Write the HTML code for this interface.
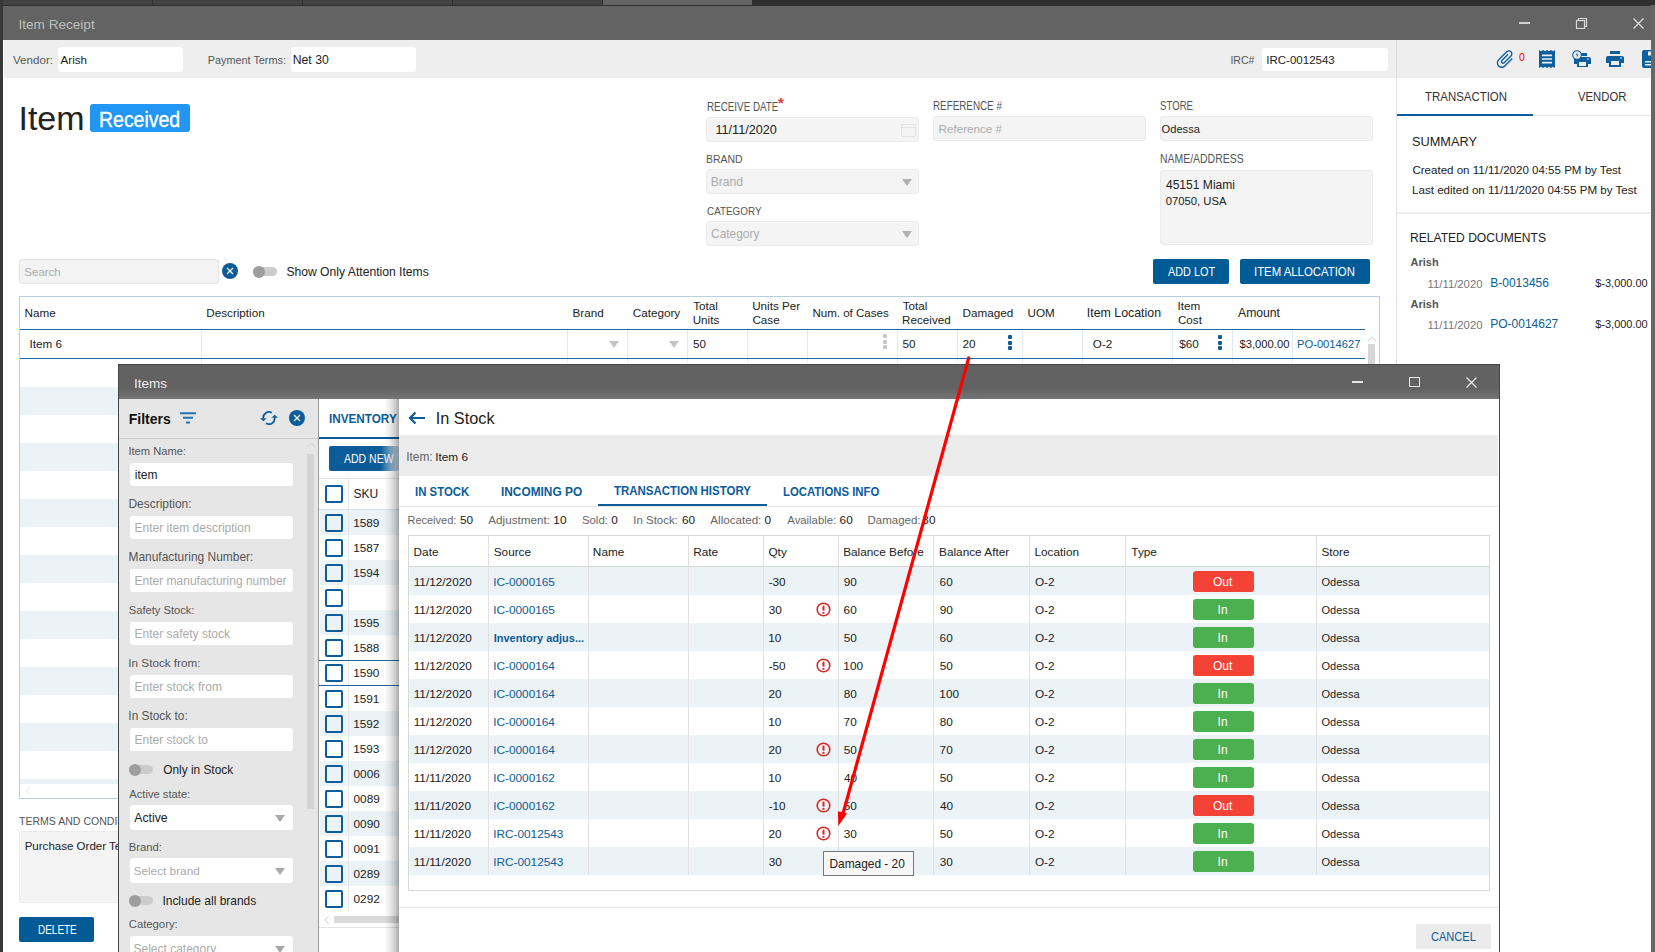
<!DOCTYPE html>
<html><head><meta charset="utf-8"><style>
html,body{margin:0;padding:0;}
body{width:1655px;height:952px;position:relative;overflow:hidden;background:#fff;font-family:"Liberation Sans",sans-serif;}
.t{position:absolute;white-space:nowrap;line-height:1;}
</style></head><body>
<div style="position:absolute;left:0px;top:0px;width:1655px;height:6px;background:#303030"></div>
<div style="position:absolute;left:0px;top:0px;width:152px;height:5px;background:#424242"></div>
<div style="position:absolute;left:153px;top:0px;width:149px;height:5px;background:#424242"></div>
<div style="position:absolute;left:303px;top:0px;width:149px;height:5px;background:#424242"></div>
<div style="position:absolute;left:453px;top:0px;width:149px;height:5px;background:#424242"></div>
<div style="position:absolute;left:603px;top:0px;width:149px;height:5px;background:#646464"></div>
<div style="position:absolute;left:0px;top:0px;width:3px;height:952px;background:#383838"></div>
<div style="position:absolute;left:1651px;top:5px;width:4px;height:947px;background:#666"></div>
<div style="position:absolute;left:3px;top:6px;width:1648px;height:34px;background:#636363"></div>
<div class="t" style="left:18.48px;top:18.00px;font-size:13.59px;color:#bdbdbd;font-weight:normal;">Item Receipt</div>
<div style="position:absolute;left:1519px;top:22px;width:11px;height:2px;background:#cfcfcf"></div>
<svg style="position:absolute;left:1575px;top:17px" width="13" height="12"><rect x="1.5" y="3.5" width="8" height="8" fill="none" stroke="#d8d8d8" stroke-width="1.2"/><path d="M3.5 3.5V1.5h8v8h-2" fill="none" stroke="#d8d8d8" stroke-width="1.2"/></svg>
<svg style="position:absolute;left:1633px;top:18px" width="11" height="11"><path d="M0.5 0.5L10.5 10.5M10.5 0.5L0.5 10.5" stroke="#e0e0e0" stroke-width="1.2"/></svg>
<div style="position:absolute;left:4px;top:40px;width:1647px;height:38px;background:#eeeeee"></div>
<div class="t" style="left:13.00px;top:54.00px;font-size:11.61px;color:#555;font-weight:normal;">Vendor:</div>
<div style="position:absolute;left:58px;top:47px;width:125px;height:25px;background:#fff;border-radius:3px"></div>
<div class="t" style="left:60.50px;top:54.00px;font-size:11.63px;color:#222222;font-weight:normal;">Arish</div>
<div class="t" style="left:207.73px;top:55.00px;font-size:10.87px;color:#555;font-weight:normal;">Payment Terms:</div>
<div style="position:absolute;left:291px;top:47px;width:125px;height:25px;background:#fff;border-radius:3px"></div>
<div class="t" style="left:292.72px;top:54.00px;font-size:12.23px;color:#222222;font-weight:normal;">Net 30</div>
<div class="t" style="left:1230.45px;top:55.00px;font-size:10.50px;color:#555;font-weight:normal;">IRC#</div>
<div style="position:absolute;left:1262px;top:48px;width:126px;height:23px;background:#fff;border-radius:3px"></div>
<div class="t" style="left:1266.26px;top:55.00px;font-size:11.53px;color:#222222;font-weight:normal;">IRC-0012543</div>
<div style="position:absolute;left:1396px;top:40px;width:1px;height:38px;background:#dcdcdc"></div>
<div class="t" style="left:18.44px;top:102.00px;font-size:33.97px;color:#222222;font-weight:normal;">Item</div>
<div style="position:absolute;left:90px;top:104px;width:100px;height:28px;background:#2196f3;border-radius:3px"></div>
<div class="t" style="left:99.44px;top:109.00px;font-size:21.59px;color:#fff;font-weight:normal;transform:scaleX(0.9020);transform-origin:0 0;-webkit-text-stroke:0.35px #fff;">Received</div>
<div class="t" style="left:706.51px;top:102.00px;font-size:11.88px;color:#555;font-weight:normal;transform:scaleX(0.8285);transform-origin:0 0;">RECEIVE DATE</div>
<div class="t" style="left:778.00px;top:95.00px;font-size:15.00px;color:#e53935;font-weight:bold;">*</div>
<div style="position:absolute;left:706px;top:117px;width:213px;height:25px;background:#f4f4f4;border:1px solid #ebebeb;border-radius:3px;box-sizing:border-box"></div>
<div class="t" style="left:715.41px;top:124.00px;font-size:12.67px;color:#222222;font-weight:normal;">11/11/2020</div>
<svg style="position:absolute;left:901px;top:122px" width="15" height="15"><rect x="0.5" y="2.5" width="14" height="12" rx="1.5" fill="none" stroke="#e2e2e2"/><path d="M1 5.5H14" stroke="#e2e2e2"/></svg>
<div class="t" style="left:706.46px;top:153.00px;font-size:11.74px;color:#555;font-weight:normal;transform:scaleX(0.8897);transform-origin:0 0;">BRAND</div>
<div style="position:absolute;left:706px;top:169px;width:213px;height:25px;background:#f4f4f4;border:1px solid #ebebeb;border-radius:3px;box-sizing:border-box"></div>
<div class="t" style="left:710.73px;top:176.00px;font-size:12.14px;color:#ababab;font-weight:normal;">Brand</div>
<svg style="position:absolute;left:902px;top:179px" width="10" height="7"><path d="M0 0H10L5.0 7Z" fill="#b0b0b0"/></svg>
<div class="t" style="left:706.81px;top:205.00px;font-size:11.74px;color:#555;font-weight:normal;transform:scaleX(0.8409);transform-origin:0 0;">CATEGORY</div>
<div style="position:absolute;left:706px;top:221px;width:213px;height:25px;background:#f4f4f4;border:1px solid #ebebeb;border-radius:3px;box-sizing:border-box"></div>
<div class="t" style="left:711.11px;top:229.00px;font-size:11.90px;color:#ababab;font-weight:normal;">Category</div>
<svg style="position:absolute;left:902px;top:231px" width="10" height="7"><path d="M0 0H10L5.0 7Z" fill="#b0b0b0"/></svg>
<div class="t" style="left:932.51px;top:101.00px;font-size:11.88px;color:#555;font-weight:normal;transform:scaleX(0.8281);transform-origin:0 0;">REFERENCE #</div>
<div style="position:absolute;left:933px;top:116px;width:213px;height:24.5px;background:#f4f4f4;border:1px solid #ebebeb;border-radius:3px;box-sizing:border-box"></div>
<div class="t" style="left:938.57px;top:123.00px;font-size:11.66px;color:#ababab;font-weight:normal;">Reference #</div>
<div class="t" style="left:1159.92px;top:101.00px;font-size:11.88px;color:#555;font-weight:normal;transform:scaleX(0.8112);transform-origin:0 0;">STORE</div>
<div style="position:absolute;left:1160px;top:116px;width:213px;height:24.5px;background:#f4f4f4;border:1px solid #ebebeb;border-radius:3px;box-sizing:border-box"></div>
<div class="t" style="left:1161.55px;top:124.00px;font-size:11.14px;color:#222222;font-weight:normal;">Odessa</div>
<div class="t" style="left:1159.56px;top:154.00px;font-size:11.88px;color:#555;font-weight:normal;transform:scaleX(0.8800);transform-origin:0 0;">NAME/ADDRESS</div>
<div style="position:absolute;left:1160px;top:170px;width:213px;height:75px;background:#f4f4f4;border:1px solid #ebebeb;border-radius:3px;box-sizing:border-box"></div>
<div class="t" style="left:1165.96px;top:179.00px;font-size:12.07px;color:#222222;font-weight:normal;">45151 Miami</div>
<div class="t" style="left:1165.75px;top:196.00px;font-size:11.27px;color:#222222;font-weight:normal;">07050, USA</div>
<div style="position:absolute;left:19px;top:259px;width:200px;height:25px;background:#f3f3f3;border:1px solid #e6e6e6;border-radius:3px;box-sizing:border-box"></div>
<div class="t" style="left:24.32px;top:267.00px;font-size:11.51px;color:#ababab;font-weight:normal;">Search</div>
<svg style="position:absolute;left:222px;top:263px" width="16" height="16"><circle cx="8" cy="8" r="8" fill="#0b5c99"/><path d="M5 5L11 11M11 5L5 11" stroke="#fff" stroke-width="1.3"/></svg>
<div style="position:absolute;left:253px;top:267.3px;width:24px;height:8.4px;background:#cccccc;border-radius:4.2px"></div>
<div style="position:absolute;left:253px;top:265.5px;width:12px;height:12px;background:#9e9e9e;border-radius:6px"></div>
<div class="t" style="left:286.39px;top:266.00px;font-size:12.15px;color:#222222;font-weight:normal;">Show Only Attention Items</div>
<div style="position:absolute;left:1153px;top:259px;width:76px;height:25px;background:#005b97;border-radius:2px"></div>
<div class="t" style="left:1168.40px;top:265.00px;font-size:13.04px;color:#fff;font-weight:normal;transform:scaleX(0.8343);transform-origin:0 0;">ADD LOT</div>
<div style="position:absolute;left:1240px;top:259px;width:130px;height:25px;background:#005b97;border-radius:2px"></div>
<div class="t" style="left:1254.48px;top:265.00px;font-size:13.04px;color:#fff;font-weight:normal;transform:scaleX(0.8724);transform-origin:0 0;">ITEM ALLOCATION</div>
<div style="position:absolute;left:19px;top:296px;width:1361px;height:503px;border:1px solid #b9cfe1;box-sizing:border-box;background:#fff"></div>
<div style="position:absolute;left:20px;top:387px;width:1359px;height:28px;background:#ecf3f6"></div>
<div style="position:absolute;left:20px;top:443px;width:1359px;height:28px;background:#ecf3f6"></div>
<div style="position:absolute;left:20px;top:499px;width:1359px;height:28px;background:#ecf3f6"></div>
<div style="position:absolute;left:20px;top:555px;width:1359px;height:28px;background:#ecf3f6"></div>
<div style="position:absolute;left:20px;top:611px;width:1359px;height:28px;background:#ecf3f6"></div>
<div style="position:absolute;left:20px;top:667px;width:1359px;height:28px;background:#ecf3f6"></div>
<div style="position:absolute;left:20px;top:723px;width:1359px;height:28px;background:#ecf3f6"></div>
<div style="position:absolute;left:20px;top:779px;width:1359px;height:5px;background:#ecf3f6"></div>
<div style="position:absolute;left:20px;top:784px;width:1359px;height:14px;background:#fff"></div>
<svg style="position:absolute;left:24px;top:786px" width="8" height="10"><path d="M6 1L2 5L6 9" fill="none" stroke="#eeeeee" stroke-width="1.2"/></svg>
<div style="position:absolute;left:20px;top:328.5px;width:1345px;height:1.5px;background:#1f6aa3"></div>
<div style="position:absolute;left:20px;top:357.5px;width:1345px;height:1.5px;background:#1f6aa3"></div>
<div style="position:absolute;left:201px;top:330px;width:1px;height:28px;background:#e3e9ee"></div>
<div style="position:absolute;left:201px;top:359px;width:1px;height:5px;background:#eef2f5"></div>
<div style="position:absolute;left:567px;top:330px;width:1px;height:28px;background:#e3e9ee"></div>
<div style="position:absolute;left:567px;top:359px;width:1px;height:5px;background:#eef2f5"></div>
<div style="position:absolute;left:627px;top:330px;width:1px;height:28px;background:#e3e9ee"></div>
<div style="position:absolute;left:627px;top:359px;width:1px;height:5px;background:#eef2f5"></div>
<div style="position:absolute;left:687px;top:330px;width:1px;height:28px;background:#e3e9ee"></div>
<div style="position:absolute;left:687px;top:359px;width:1px;height:5px;background:#eef2f5"></div>
<div style="position:absolute;left:747px;top:330px;width:1px;height:28px;background:#e3e9ee"></div>
<div style="position:absolute;left:747px;top:359px;width:1px;height:5px;background:#eef2f5"></div>
<div style="position:absolute;left:807px;top:330px;width:1px;height:28px;background:#e3e9ee"></div>
<div style="position:absolute;left:807px;top:359px;width:1px;height:5px;background:#eef2f5"></div>
<div style="position:absolute;left:897px;top:330px;width:1px;height:28px;background:#e3e9ee"></div>
<div style="position:absolute;left:897px;top:359px;width:1px;height:5px;background:#eef2f5"></div>
<div style="position:absolute;left:957px;top:330px;width:1px;height:28px;background:#e3e9ee"></div>
<div style="position:absolute;left:957px;top:359px;width:1px;height:5px;background:#eef2f5"></div>
<div style="position:absolute;left:1022px;top:330px;width:1px;height:28px;background:#e3e9ee"></div>
<div style="position:absolute;left:1022px;top:359px;width:1px;height:5px;background:#eef2f5"></div>
<div style="position:absolute;left:1082px;top:330px;width:1px;height:28px;background:#e3e9ee"></div>
<div style="position:absolute;left:1082px;top:359px;width:1px;height:5px;background:#eef2f5"></div>
<div style="position:absolute;left:1172px;top:330px;width:1px;height:28px;background:#e3e9ee"></div>
<div style="position:absolute;left:1172px;top:359px;width:1px;height:5px;background:#eef2f5"></div>
<div style="position:absolute;left:1232px;top:330px;width:1px;height:28px;background:#e3e9ee"></div>
<div style="position:absolute;left:1232px;top:359px;width:1px;height:5px;background:#eef2f5"></div>
<div style="position:absolute;left:1292px;top:330px;width:1px;height:28px;background:#e3e9ee"></div>
<div style="position:absolute;left:1292px;top:359px;width:1px;height:5px;background:#eef2f5"></div>
<div class="t" style="left:24.46px;top:307.00px;font-size:11.70px;color:#222222;font-weight:normal;">Name</div>
<div class="t" style="left:206.26px;top:307.00px;font-size:11.70px;color:#222222;font-weight:normal;">Description</div>
<div class="t" style="left:572.46px;top:307.00px;font-size:11.70px;color:#222222;font-weight:normal;">Brand</div>
<div class="t" style="left:632.71px;top:307.00px;font-size:11.70px;color:#222222;font-weight:normal;">Category</div>
<div class="t" style="left:693.27px;top:300.00px;font-size:11.70px;color:#222222;font-weight:normal;">Total</div>
<div class="t" style="left:692.68px;top:314.00px;font-size:11.70px;color:#222222;font-weight:normal;">Units</div>
<div class="t" style="left:752.18px;top:300.00px;font-size:11.70px;color:#222222;font-weight:normal;">Units Per</div>
<div class="t" style="left:752.41px;top:314.00px;font-size:11.70px;color:#222222;font-weight:normal;">Case</div>
<div class="t" style="left:812.38px;top:308.00px;font-size:11.55px;color:#222222;font-weight:normal;">Num. of Cases</div>
<div class="t" style="left:902.77px;top:300.00px;font-size:11.70px;color:#222222;font-weight:normal;">Total</div>
<div class="t" style="left:902.06px;top:314.00px;font-size:11.70px;color:#222222;font-weight:normal;">Received</div>
<div class="t" style="left:962.46px;top:307.00px;font-size:11.70px;color:#222222;font-weight:normal;">Damaged</div>
<div class="t" style="left:1027.58px;top:307.00px;font-size:11.70px;color:#222222;font-weight:normal;">UOM</div>
<div class="t" style="left:1086.78px;top:307.00px;font-size:12.39px;color:#222222;font-weight:normal;">Item Location</div>
<div class="t" style="left:1177.45px;top:300.00px;font-size:11.70px;color:#222222;font-weight:normal;">Item</div>
<div class="t" style="left:1177.91px;top:314.00px;font-size:11.70px;color:#222222;font-weight:normal;">Cost</div>
<div class="t" style="left:1238.00px;top:307.00px;font-size:12.20px;color:#222222;font-weight:normal;">Amount</div>
<div class="t" style="left:29.55px;top:338.00px;font-size:11.70px;color:#222222;font-weight:normal;">Item 6</div>
<svg style="position:absolute;left:609px;top:341px" width="10" height="7"><path d="M0 0H10L5.0 7Z" fill="#c4c4c4"/></svg>
<svg style="position:absolute;left:669px;top:341px" width="10" height="7"><path d="M0 0H10L5.0 7Z" fill="#c4c4c4"/></svg>
<div class="t" style="left:693.03px;top:338.00px;font-size:11.70px;color:#222222;font-weight:normal;">50</div>
<div style="position:absolute;left:883px;top:334.0px;width:4px;height:4px;background:#c8c8c8;border-radius:1px"></div>
<div style="position:absolute;left:883px;top:339.5px;width:4px;height:4px;background:#c8c8c8;border-radius:1px"></div>
<div style="position:absolute;left:883px;top:345.0px;width:4px;height:4px;background:#c8c8c8;border-radius:1px"></div>
<div class="t" style="left:902.53px;top:338.00px;font-size:11.70px;color:#222222;font-weight:normal;">50</div>
<div class="t" style="left:962.41px;top:338.00px;font-size:11.70px;color:#222222;font-weight:normal;">20</div>
<div style="position:absolute;left:1008px;top:335.0px;width:4px;height:4px;background:#0b5c99;border-radius:1px"></div>
<div style="position:absolute;left:1008px;top:340.5px;width:4px;height:4px;background:#0b5c99;border-radius:1px"></div>
<div style="position:absolute;left:1008px;top:346.0px;width:4px;height:4px;background:#0b5c99;border-radius:1px"></div>
<div class="t" style="left:1092.83px;top:338.00px;font-size:11.70px;color:#222222;font-weight:normal;">O-2</div>
<div class="t" style="left:1179.28px;top:338.00px;font-size:11.70px;color:#222222;font-weight:normal;">$60</div>
<div style="position:absolute;left:1218px;top:335.0px;width:4px;height:4px;background:#0b5c99;border-radius:1px"></div>
<div style="position:absolute;left:1218px;top:340.5px;width:4px;height:4px;background:#0b5c99;border-radius:1px"></div>
<div style="position:absolute;left:1218px;top:346.0px;width:4px;height:4px;background:#0b5c99;border-radius:1px"></div>
<div class="t" style="left:1239.39px;top:339.00px;font-size:11.25px;color:#222222;font-weight:normal;">$3,000.00</div>
<div class="t" style="left:1297.00px;top:339.00px;font-size:11.20px;color:#0b5c99;font-weight:normal;">PO-0014627</div>
<div style="position:absolute;left:1365px;top:330px;width:14px;height:34px;background:#fff"></div>
<div style="position:absolute;left:1368px;top:344px;width:7px;height:20px;background:#d6d6d6"></div>
<svg style="position:absolute;left:1367px;top:336px" width="10" height="6"><path d="M1 5L5 1L9 5" fill="none" stroke="#e0e0e0" stroke-width="1.2"/></svg>
<div class="t" style="left:19.09px;top:816.00px;font-size:11.59px;color:#555;font-weight:normal;transform:scaleX(0.9102);transform-origin:0 0;">TERMS AND CONDITIONS</div>
<div style="position:absolute;left:19px;top:831px;width:300px;height:72px;background:#f4f4f4;border:1px solid #ebebeb;border-radius:3px;box-sizing:border-box"></div>
<div class="t" style="left:24.68px;top:841.00px;font-size:11.54px;color:#222222;font-weight:normal;">Purchase Order Terms</div>
<div style="position:absolute;left:19px;top:917px;width:75px;height:25px;background:#005b97;border-radius:2px"></div>
<div class="t" style="left:37.60px;top:923.00px;font-size:13.04px;color:#fff;font-weight:normal;transform:scaleX(0.7646);transform-origin:0 0;">DELETE</div>
<div style="position:absolute;left:1396px;top:78px;width:1px;height:874px;background:#e2e2e2"></div>
<div class="t" style="left:1424.67px;top:90.00px;font-size:13.62px;color:#333;font-weight:normal;transform:scaleX(0.8411);transform-origin:0 0;">TRANSACTION</div>
<div class="t" style="left:1578.00px;top:90.00px;font-size:13.62px;color:#333;font-weight:normal;transform:scaleX(0.8310);transform-origin:0 0;">VENDOR</div>
<div style="position:absolute;left:1397px;top:114.5px;width:254px;height:1px;background:#e6e6e6"></div>
<div style="position:absolute;left:1397px;top:113.5px;width:136px;height:2.5px;background:#0b5c99"></div>
<div class="t" style="left:1412.36px;top:136.00px;font-size:12.61px;color:#222222;font-weight:normal;transform:scaleX(1.0111);transform-origin:0 0;">SUMMARY</div>
<div class="t" style="left:1412.42px;top:165.00px;font-size:11.55px;color:#222222;font-weight:normal;">Created on 11/11/2020 04:55 PM by Test</div>
<div class="t" style="left:1412.07px;top:185.00px;font-size:11.58px;color:#222222;font-weight:normal;">Last edited on 11/11/2020 04:55 PM by Test</div>
<div style="position:absolute;left:1397px;top:212px;width:254px;height:2px;background:#ededed"></div>
<div class="t" style="left:1409.53px;top:232.00px;font-size:12.46px;color:#222222;font-weight:normal;transform:scaleX(0.9696);transform-origin:0 0;">RELATED DOCUMENTS</div>
<div class="t" style="left:1410.58px;top:257.00px;font-size:11.00px;color:#555;font-weight:bold;">Arish</div>
<div class="t" style="left:1427.61px;top:279.00px;font-size:11.30px;color:#777;font-weight:normal;">11/11/2020</div>
<div class="t" style="left:1490.24px;top:277.00px;font-size:12.00px;color:#0b5c99;font-weight:normal;">B-0013456</div>
<div class="t" style="left:1595.29px;top:278.00px;font-size:10.96px;color:#222222;font-weight:normal;">$-3,000.00</div>
<div class="t" style="left:1410.58px;top:299.00px;font-size:11.00px;color:#555;font-weight:bold;">Arish</div>
<div class="t" style="left:1427.61px;top:320.00px;font-size:11.30px;color:#777;font-weight:normal;">11/11/2020</div>
<div class="t" style="left:1490.24px;top:318.00px;font-size:12.00px;color:#0b5c99;font-weight:normal;">PO-0014627</div>
<div class="t" style="left:1595.29px;top:319.00px;font-size:10.96px;color:#222222;font-weight:normal;">$-3,000.00</div>
<svg style="position:absolute;left:1494px;top:47px" width="22" height="24" viewBox="0 0 24 24"><g transform="rotate(45 12 12)"><path fill="#0d5f9e" d="M16.5 6v11.5c0 2.21-1.79 4-4 4s-4-1.79-4-4V5c0-1.38 1.12-2.5 2.5-2.5s2.5 1.12 2.5 2.5v10.5c0 .55-.45 1-1 1s-1-.45-1-1V6H10v9.5c0 1.38 1.12 2.5 2.5 2.5s2.5-1.12 2.5-2.5V5c0-2.21-1.79-4-4-4S7 2.79 7 5v12.5c0 3.04 2.46 5.5 5.5 5.5s5.5-2.46 5.5-5.5V6h-1.5z"/></g></svg>
<div class="t" style="left:1519.08px;top:52.00px;font-size:10.50px;color:#f00;font-weight:normal;">0</div>
<svg style="position:absolute;left:1539px;top:50px" width="16" height="18" viewBox="0 0 16 18"><path fill="#0d5f9e" d="M0 0L2 1.3L4 0L6 1.3L8 0L10 1.3L12 0L14 1.3L16 0V18L14 16.7L12 18L10 16.7L8 18L6 16.7L4 18L2 16.7L0 18Z"/><path d="M2.9 5.4H13M2.9 9H13M2.9 12.6H13" stroke="#eee" stroke-width="1.7"/></svg>
<svg style="position:absolute;left:1572px;top:50px" width="19" height="18" viewBox="0 0 19 18"><rect x="7" y="3" width="8" height="3" fill="#0d5f9e"/><path fill="#0d5f9e" d="M3 7H17a2 2 0 0 1 2 2V14H16V17H5V14H2V9a2 2 0 0 1 1-2Z"/><rect x="7" y="12" width="7" height="4" fill="#eee"/><circle cx="16" cy="9" r="0.8" fill="#eee"/><circle cx="5" cy="5" r="4.3" fill="#eee" stroke="#0d5f9e" stroke-width="1.1"/><path d="M5.8 2L3.6 5.3H5.2L4.4 8L6.6 4.6H5Z" fill="#0d5f9e"/></svg>
<svg style="position:absolute;left:1606px;top:51px" width="18" height="17" viewBox="0 0 18 17"><rect x="4" y="0" width="10" height="3" fill="#0d5f9e"/><path fill="#0d5f9e" d="M2 5H16a2 2 0 0 1 2 2V12H15V16H3V12H0V7a2 2 0 0 1 2-2Z"/><rect x="5" y="10" width="8" height="4" fill="#eee"/><circle cx="15" cy="7" r="0.8" fill="#eee"/></svg>
<svg style="position:absolute;left:1642px;top:50px" width="9" height="18" viewBox="0 0 9 18"><rect x="0" y="0" width="18" height="18" rx="2" fill="#0d5f9e"/><rect x="3" y="11" width="8" height="1.5" fill="#eee"/><rect x="3" y="14" width="8" height="1.5" fill="#eee"/><rect x="6" y="1.5" width="5" height="4" fill="#eee"/></svg>
<div style="position:absolute;left:118px;top:364px;width:1382px;height:588px;background:#fff;border:1px solid #454545;border-bottom:none;box-sizing:border-box"></div>
<div style="position:absolute;left:119px;top:365px;width:1380px;height:34px;background:linear-gradient(#626262 0%,#626262 68%,#757575 100%)"></div>
<div class="t" style="left:134.09px;top:377.00px;font-size:13.50px;color:#ececec;font-weight:normal;">Items</div>
<div style="position:absolute;left:1352px;top:381px;width:11px;height:1.5px;background:#e6e6e6"></div>
<div style="position:absolute;left:1409px;top:377px;width:11px;height:10px;border:1.2px solid #e6e6e6;box-sizing:border-box"></div>
<svg style="position:absolute;left:1466px;top:377px" width="11" height="11"><path d="M0.5 0.5L10.5 10.5M10.5 0.5L0.5 10.5" stroke="#e6e6e6" stroke-width="1.2"/></svg>
<div style="position:absolute;left:119px;top:399px;width:199px;height:553px;background:#e6e6e6"></div>
<div style="position:absolute;left:318px;top:399px;width:1px;height:553px;background:#9a9a9a"></div>
<div class="t" style="left:128.76px;top:412.00px;font-size:14.00px;color:#111;font-weight:bold;">Filters</div>
<svg style="position:absolute;left:180px;top:412px" width="17" height="12"><path d="M0 1.2H16M3 5.8H13M6 10.5H10" stroke="#1f74b5" stroke-width="2"/></svg>
<svg style="position:absolute;left:259px;top:410px" width="20" height="16" viewBox="0 0 20 16"><path d="M12.8 2.7A5.7 5.7 0 0 0 4.4 8.6" fill="none" stroke="#0b5c99" stroke-width="1.8"/><path d="M1 8.3H7.6L4.3 11.3Z" fill="#0b5c99"/><path d="M7 13.3A5.7 5.7 0 0 0 15.6 7.6" fill="none" stroke="#0b5c99" stroke-width="1.8"/><path d="M12.4 7.8H19L15.7 4.8Z" fill="#0b5c99"/></svg>
<svg style="position:absolute;left:289px;top:410px" width="16" height="16"><circle cx="8" cy="8" r="8" fill="#0b5c99"/><path d="M5 5L11 11M11 5L5 11" stroke="#fff" stroke-width="1.3"/></svg>
<div style="position:absolute;left:119px;top:438px;width:199px;height:1px;background:#cdcdcd"></div>
<div class="t" style="left:128.40px;top:446.00px;font-size:11.16px;color:#555;font-weight:normal;">Item Name:</div>
<div style="position:absolute;left:130px;top:463px;width:162.5px;height:23px;background:#fff;border-radius:3px"></div>
<div class="t" style="left:134.78px;top:469.00px;font-size:12.00px;color:#222222;font-weight:normal;">item</div>
<div class="t" style="left:128.44px;top:499.00px;font-size:11.96px;color:#555;font-weight:normal;">Description:</div>
<div style="position:absolute;left:130px;top:516px;width:162.5px;height:23px;background:#fff;border-radius:3px"></div>
<div class="t" style="left:134.54px;top:522.00px;font-size:12.00px;color:#ababab;font-weight:normal;">Enter item description</div>
<div class="t" style="left:128.44px;top:552.00px;font-size:11.96px;color:#555;font-weight:normal;">Manufacturing Number:</div>
<div style="position:absolute;left:130px;top:569px;width:162.5px;height:23px;background:#fff;border-radius:3px"></div>
<div class="t" style="left:134.54px;top:575.00px;font-size:12.00px;color:#ababab;font-weight:normal;">Enter manufacturing number</div>
<div class="t" style="left:128.84px;top:605.00px;font-size:11.13px;color:#555;font-weight:normal;">Safety Stock:</div>
<div style="position:absolute;left:130px;top:622px;width:162.5px;height:23px;background:#fff;border-radius:3px"></div>
<div class="t" style="left:134.54px;top:628.00px;font-size:12.00px;color:#ababab;font-weight:normal;">Enter safety stock</div>
<div class="t" style="left:128.35px;top:657.00px;font-size:11.69px;color:#555;font-weight:normal;">In Stock from:</div>
<div style="position:absolute;left:130px;top:675px;width:162.5px;height:23px;background:#fff;border-radius:3px"></div>
<div class="t" style="left:134.54px;top:681.00px;font-size:12.00px;color:#ababab;font-weight:normal;">Enter stock from</div>
<div class="t" style="left:128.33px;top:711.00px;font-size:11.89px;color:#555;font-weight:normal;">In Stock to:</div>
<div style="position:absolute;left:130px;top:728px;width:162.5px;height:23px;background:#fff;border-radius:3px"></div>
<div class="t" style="left:134.54px;top:734.00px;font-size:12.00px;color:#ababab;font-weight:normal;">Enter stock to</div>
<div style="position:absolute;left:307px;top:454px;width:7px;height:355px;background:#d3d3d3"></div>
<svg style="position:absolute;left:306px;top:442px" width="10" height="6"><path d="M1 5L5 1L9 5" fill="none" stroke="#d6d6d6" stroke-width="1.2"/></svg>
<div style="position:absolute;left:129.1px;top:765.3px;width:24px;height:8.4px;background:#cccccc;border-radius:4.2px"></div>
<div style="position:absolute;left:129.1px;top:763.5px;width:12px;height:12px;background:#9e9e9e;border-radius:6px"></div>
<div class="t" style="left:163.23px;top:765.00px;font-size:11.86px;color:#222222;font-weight:normal;">Only in Stock</div>
<div class="t" style="left:129.30px;top:789.00px;font-size:11.19px;color:#555;font-weight:normal;">Active state:</div>
<div style="position:absolute;left:130px;top:805px;width:162.5px;height:25px;background:#fff;border-radius:3px"></div>
<div class="t" style="left:134.20px;top:812.00px;font-size:12.31px;color:#222222;font-weight:normal;">Active</div>
<svg style="position:absolute;left:275px;top:815px" width="10" height="7"><path d="M0 0H10L5.0 7Z" fill="#a8a8a8"/></svg>
<div class="t" style="left:128.70px;top:842.00px;font-size:11.30px;color:#555;font-weight:normal;">Brand:</div>
<div style="position:absolute;left:130px;top:858px;width:162.5px;height:25px;background:#fff;border-radius:3px"></div>
<div class="t" style="left:133.51px;top:866.00px;font-size:11.82px;color:#ababab;font-weight:normal;">Select brand</div>
<svg style="position:absolute;left:275px;top:868px" width="10" height="7"><path d="M0 0H10L5.0 7Z" fill="#a8a8a8"/></svg>
<div style="position:absolute;left:129.1px;top:896.4px;width:24px;height:8.4px;background:#cccccc;border-radius:4.2px"></div>
<div style="position:absolute;left:129.1px;top:894.6px;width:12px;height:12px;background:#9e9e9e;border-radius:6px"></div>
<div class="t" style="left:162.42px;top:896.00px;font-size:11.97px;color:#222222;font-weight:normal;">Include all brands</div>
<div class="t" style="left:128.73px;top:919.00px;font-size:11.31px;color:#555;font-weight:normal;">Category:</div>
<div style="position:absolute;left:129.5px;top:936.2px;width:163px;height:25px;background:#fff;border-radius:3px"></div>
<div class="t" style="left:133.50px;top:943.00px;font-size:12.00px;color:#ababab;font-weight:normal;">Select category</div>
<svg style="position:absolute;left:275px;top:946px" width="10" height="7"><path d="M0 0H10L5.0 7Z" fill="#a8a8a8"/></svg>
<div class="t" style="left:328.80px;top:413.00px;font-size:12.75px;color:#0b5c99;font-weight:bold;transform:scaleX(0.9189);transform-origin:0 0;">INVENTORY</div>
<div style="position:absolute;left:319px;top:436.5px;width:80px;height:2px;background:#0b5c99"></div>
<div style="position:absolute;left:329px;top:446px;width:70px;height:25px;background:#0b5c99;border-radius:2px"></div>
<div class="t" style="left:344.20px;top:453.00px;font-size:12.61px;color:#fff;font-weight:normal;transform:scaleX(0.8340);transform-origin:0 0;">ADD NEW</div>
<div style="position:absolute;left:319px;top:478px;width:80px;height:1px;background:#e2e2e2"></div>
<div style="position:absolute;left:325.2px;top:485px;width:17.5px;height:17.5px;border:2px solid #0b5c99;border-radius:2px;box-sizing:border-box;background:transparent"></div>
<div style="position:absolute;left:348px;top:479px;width:1px;height:30px;background:#e6e6e6"></div>
<div class="t" style="left:353.40px;top:488.00px;font-size:12.00px;color:#222222;font-weight:normal;">SKU</div>
<div style="position:absolute;left:319px;top:509px;width:80px;height:1px;background:#dedede"></div>
<div style="position:absolute;left:320px;top:510px;width:79px;height:25px;background:#ecf3f6"></div>
<div style="position:absolute;left:348px;top:510px;width:1px;height:25px;background:#e3e8ec"></div>
<div style="position:absolute;left:325.2px;top:514px;width:17.5px;height:17.5px;border:2px solid #0b5c99;border-radius:2px;box-sizing:border-box;background:transparent"></div>
<div class="t" style="left:353.17px;top:518.00px;font-size:11.80px;color:#222222;font-weight:normal;">1589</div>
<div style="position:absolute;left:348px;top:535px;width:1px;height:25px;background:#e3e8ec"></div>
<div style="position:absolute;left:325.2px;top:539px;width:17.5px;height:17.5px;border:2px solid #0b5c99;border-radius:2px;box-sizing:border-box;background:transparent"></div>
<div class="t" style="left:353.17px;top:543.00px;font-size:11.80px;color:#222222;font-weight:normal;">1587</div>
<div style="position:absolute;left:320px;top:560px;width:79px;height:25px;background:#ecf3f6"></div>
<div style="position:absolute;left:348px;top:560px;width:1px;height:25px;background:#e3e8ec"></div>
<div style="position:absolute;left:325.2px;top:564px;width:17.5px;height:17.5px;border:2px solid #0b5c99;border-radius:2px;box-sizing:border-box;background:transparent"></div>
<div class="t" style="left:353.17px;top:568.00px;font-size:11.80px;color:#222222;font-weight:normal;">1594</div>
<div style="position:absolute;left:348px;top:585px;width:1px;height:25px;background:#e3e8ec"></div>
<div style="position:absolute;left:325.2px;top:589px;width:17.5px;height:17.5px;border:2px solid #0b5c99;border-radius:2px;box-sizing:border-box;background:transparent"></div>
<div class="t" style="left:354.00px;top:593.00px;font-size:11.80px;color:#222222;font-weight:normal;"></div>
<div style="position:absolute;left:320px;top:610px;width:79px;height:25px;background:#ecf3f6"></div>
<div style="position:absolute;left:348px;top:610px;width:1px;height:25px;background:#e3e8ec"></div>
<div style="position:absolute;left:325.2px;top:614px;width:17.5px;height:17.5px;border:2px solid #0b5c99;border-radius:2px;box-sizing:border-box;background:transparent"></div>
<div class="t" style="left:353.17px;top:618.00px;font-size:11.80px;color:#222222;font-weight:normal;">1595</div>
<div style="position:absolute;left:348px;top:635px;width:1px;height:25px;background:#e3e8ec"></div>
<div style="position:absolute;left:325.2px;top:639px;width:17.5px;height:17.5px;border:2px solid #0b5c99;border-radius:2px;box-sizing:border-box;background:transparent"></div>
<div class="t" style="left:353.17px;top:643.00px;font-size:11.80px;color:#222222;font-weight:normal;">1588</div>
<div style="position:absolute;left:348px;top:660px;width:1px;height:25px;background:#e3e8ec"></div>
<div style="position:absolute;left:319px;top:659.5px;width:80px;height:1.2px;background:#2166a0"></div>
<div style="position:absolute;left:319px;top:685px;width:80px;height:1.2px;background:#2166a0"></div>
<div style="position:absolute;left:325.2px;top:664px;width:17.5px;height:17.5px;border:2px solid #0b5c99;border-radius:2px;box-sizing:border-box;background:transparent"></div>
<div class="t" style="left:353.17px;top:668.00px;font-size:11.80px;color:#222222;font-weight:normal;">1590</div>
<div style="position:absolute;left:348px;top:686px;width:1px;height:25px;background:#e3e8ec"></div>
<div style="position:absolute;left:325.2px;top:690px;width:17.5px;height:17.5px;border:2px solid #0b5c99;border-radius:2px;box-sizing:border-box;background:transparent"></div>
<div class="t" style="left:353.17px;top:694.00px;font-size:11.80px;color:#222222;font-weight:normal;">1591</div>
<div style="position:absolute;left:320px;top:711px;width:79px;height:25px;background:#ecf3f6"></div>
<div style="position:absolute;left:348px;top:711px;width:1px;height:25px;background:#e3e8ec"></div>
<div style="position:absolute;left:325.2px;top:715px;width:17.5px;height:17.5px;border:2px solid #0b5c99;border-radius:2px;box-sizing:border-box;background:transparent"></div>
<div class="t" style="left:353.17px;top:719.00px;font-size:11.80px;color:#222222;font-weight:normal;">1592</div>
<div style="position:absolute;left:348px;top:736px;width:1px;height:25px;background:#e3e8ec"></div>
<div style="position:absolute;left:325.2px;top:740px;width:17.5px;height:17.5px;border:2px solid #0b5c99;border-radius:2px;box-sizing:border-box;background:transparent"></div>
<div class="t" style="left:353.17px;top:744.00px;font-size:11.80px;color:#222222;font-weight:normal;">1593</div>
<div style="position:absolute;left:320px;top:761px;width:79px;height:25px;background:#ecf3f6"></div>
<div style="position:absolute;left:348px;top:761px;width:1px;height:25px;background:#e3e8ec"></div>
<div style="position:absolute;left:325.2px;top:765px;width:17.5px;height:17.5px;border:2px solid #0b5c99;border-radius:2px;box-sizing:border-box;background:transparent"></div>
<div class="t" style="left:353.53px;top:769.00px;font-size:11.80px;color:#222222;font-weight:normal;">0006</div>
<div style="position:absolute;left:348px;top:786px;width:1px;height:25px;background:#e3e8ec"></div>
<div style="position:absolute;left:325.2px;top:790px;width:17.5px;height:17.5px;border:2px solid #0b5c99;border-radius:2px;box-sizing:border-box;background:transparent"></div>
<div class="t" style="left:353.53px;top:794.00px;font-size:11.80px;color:#222222;font-weight:normal;">0089</div>
<div style="position:absolute;left:320px;top:811px;width:79px;height:25px;background:#ecf3f6"></div>
<div style="position:absolute;left:348px;top:811px;width:1px;height:25px;background:#e3e8ec"></div>
<div style="position:absolute;left:325.2px;top:815px;width:17.5px;height:17.5px;border:2px solid #0b5c99;border-radius:2px;box-sizing:border-box;background:transparent"></div>
<div class="t" style="left:353.53px;top:819.00px;font-size:11.80px;color:#222222;font-weight:normal;">0090</div>
<div style="position:absolute;left:348px;top:836px;width:1px;height:25px;background:#e3e8ec"></div>
<div style="position:absolute;left:325.2px;top:840px;width:17.5px;height:17.5px;border:2px solid #0b5c99;border-radius:2px;box-sizing:border-box;background:transparent"></div>
<div class="t" style="left:353.53px;top:844.00px;font-size:11.80px;color:#222222;font-weight:normal;">0091</div>
<div style="position:absolute;left:320px;top:861px;width:79px;height:25px;background:#ecf3f6"></div>
<div style="position:absolute;left:348px;top:861px;width:1px;height:25px;background:#e3e8ec"></div>
<div style="position:absolute;left:325.2px;top:865px;width:17.5px;height:17.5px;border:2px solid #0b5c99;border-radius:2px;box-sizing:border-box;background:transparent"></div>
<div class="t" style="left:353.53px;top:869.00px;font-size:11.80px;color:#222222;font-weight:normal;">0289</div>
<div style="position:absolute;left:348px;top:886px;width:1px;height:25px;background:#e3e8ec"></div>
<div style="position:absolute;left:325.2px;top:890px;width:17.5px;height:17.5px;border:2px solid #0b5c99;border-radius:2px;box-sizing:border-box;background:transparent"></div>
<div class="t" style="left:353.53px;top:894.00px;font-size:11.80px;color:#222222;font-weight:normal;">0292</div>
<div style="position:absolute;left:319px;top:927px;width:80px;height:1px;background:#e2e2e2"></div>
<div style="position:absolute;left:334px;top:916px;width:65px;height:7px;background:#dadada"></div>
<svg style="position:absolute;left:323px;top:915px" width="7" height="10"><path d="M6 1L2 5L6 9" fill="none" stroke="#e2e2e2" stroke-width="1.2"/></svg>
<div style="position:absolute;left:381px;top:446px;width:18px;height:25px;background:linear-gradient(to right,rgba(255,255,255,0) 0%,rgba(255,255,255,0.45) 50%,rgba(255,255,255,0.8) 100%)"></div>
<div style="position:absolute;left:384px;top:399px;width:15px;height:553px;background:linear-gradient(to right,rgba(0,0,0,0) 0%,rgba(0,0,0,0.08) 40%,rgba(0,0,0,0.2) 75%,rgba(0,0,0,0.34) 100%)"></div>
<div style="position:absolute;left:399px;top:399px;width:1100px;height:553px;background:#fff"></div>
<svg style="position:absolute;left:408px;top:411px" width="18" height="14" viewBox="0 0 18 14"><path d="M17 7H2M7.5 1.5L2 7L7.5 12.5" fill="none" stroke="#0b5c99" stroke-width="2.2"/></svg>
<div class="t" style="left:435.73px;top:410.00px;font-size:16.30px;color:#222222;font-weight:normal;">In Stock</div>
<div style="position:absolute;left:399px;top:435px;width:1099px;height:41px;background:#ececec"></div>
<div class="t" style="left:406.23px;top:452.00px;font-size:11.91px;color:#666;font-weight:normal;">Item:</div>
<div class="t" style="left:435.24px;top:452.00px;font-size:11.80px;color:#222222;font-weight:normal;">Item 6</div>
<div class="t" style="left:414.82px;top:486.00px;font-size:12.61px;color:#0b5c99;font-weight:bold;transform:scaleX(0.9047);transform-origin:0 0;">IN STOCK</div>
<div class="t" style="left:500.99px;top:486.00px;font-size:12.61px;color:#0b5c99;font-weight:bold;transform:scaleX(0.9414);transform-origin:0 0;">INCOMING PO</div>
<div class="t" style="left:614.29px;top:485.00px;font-size:12.61px;color:#0b5c99;font-weight:bold;transform:scaleX(0.9089);transform-origin:0 0;">TRANSACTION HISTORY</div>
<div class="t" style="left:782.92px;top:486.00px;font-size:12.61px;color:#0b5c99;font-weight:bold;transform:scaleX(0.9000);transform-origin:0 0;">LOCATIONS INFO</div>
<div style="position:absolute;left:399px;top:506px;width:1099px;height:1px;background:#e8e8e8"></div>
<div style="position:absolute;left:598px;top:503.7px;width:168.6px;height:2px;background:#0b5c99"></div>
<div class="t" style="left:407.52px;top:515.00px;font-size:10.98px;color:#666;font-weight:normal;">Received:</div>
<div class="t" style="left:459.93px;top:515.00px;font-size:11.80px;color:#222222;font-weight:normal;">50</div>
<div class="t" style="left:488.30px;top:514.00px;font-size:11.71px;color:#666;font-weight:normal;">Adjustment:</div>
<div class="t" style="left:553.37px;top:515.00px;font-size:11.80px;color:#222222;font-weight:normal;">10</div>
<div class="t" style="left:581.93px;top:515.00px;font-size:11.40px;color:#666;font-weight:normal;">Sold:</div>
<div class="t" style="left:611.23px;top:515.00px;font-size:11.80px;color:#222222;font-weight:normal;">0</div>
<div class="t" style="left:633.37px;top:515.00px;font-size:11.43px;color:#666;font-weight:normal;">In Stock:</div>
<div class="t" style="left:681.91px;top:515.00px;font-size:11.80px;color:#222222;font-weight:normal;">60</div>
<div class="t" style="left:710.30px;top:514.00px;font-size:11.63px;color:#666;font-weight:normal;">Allocated:</div>
<div class="t" style="left:764.53px;top:515.00px;font-size:11.80px;color:#222222;font-weight:normal;">0</div>
<div class="t" style="left:787.30px;top:515.00px;font-size:11.32px;color:#666;font-weight:normal;">Available:</div>
<div class="t" style="left:839.61px;top:515.00px;font-size:11.80px;color:#222222;font-weight:normal;">60</div>
<div class="t" style="left:867.48px;top:515.00px;font-size:11.51px;color:#666;font-weight:normal;">Damaged:</div>
<div class="t" style="left:922.33px;top:515.00px;font-size:11.80px;color:#222222;font-weight:normal;">30</div>
<div style="position:absolute;left:408px;top:535px;width:1081.5px;height:356px;border:1px solid #d9d9d9;box-sizing:border-box;background:#fff"></div>
<div style="position:absolute;left:409px;top:566px;width:1079.5px;height:1px;background:#d5d5d5"></div>
<div style="position:absolute;left:409px;top:567px;width:1079.5px;height:28px;background:#ecf3f6"></div>
<div style="position:absolute;left:409px;top:623px;width:1079.5px;height:28px;background:#ecf3f6"></div>
<div style="position:absolute;left:409px;top:679px;width:1079.5px;height:28px;background:#ecf3f6"></div>
<div style="position:absolute;left:409px;top:735px;width:1079.5px;height:28px;background:#ecf3f6"></div>
<div style="position:absolute;left:409px;top:791px;width:1079.5px;height:28px;background:#ecf3f6"></div>
<div style="position:absolute;left:409px;top:847px;width:1079.5px;height:28px;background:#ecf3f6"></div>
<div style="position:absolute;left:488px;top:536px;width:1px;height:339px;background:#e1e1e1"></div>
<div style="position:absolute;left:588px;top:536px;width:1px;height:339px;background:#e1e1e1"></div>
<div style="position:absolute;left:688px;top:536px;width:1px;height:339px;background:#e1e1e1"></div>
<div style="position:absolute;left:763px;top:536px;width:1px;height:339px;background:#e1e1e1"></div>
<div style="position:absolute;left:838px;top:536px;width:1px;height:339px;background:#e1e1e1"></div>
<div style="position:absolute;left:933px;top:536px;width:1px;height:339px;background:#e1e1e1"></div>
<div style="position:absolute;left:1029px;top:536px;width:1px;height:339px;background:#e1e1e1"></div>
<div style="position:absolute;left:1125px;top:536px;width:1px;height:339px;background:#e1e1e1"></div>
<div style="position:absolute;left:1316px;top:536px;width:1px;height:339px;background:#e1e1e1"></div>
<div class="t" style="left:413.56px;top:547.00px;font-size:11.80px;color:#222222;font-weight:normal;">Date</div>
<div class="t" style="left:493.71px;top:547.00px;font-size:11.80px;color:#222222;font-weight:normal;">Source</div>
<div class="t" style="left:592.86px;top:547.00px;font-size:11.80px;color:#222222;font-weight:normal;">Name</div>
<div class="t" style="left:693.16px;top:547.00px;font-size:11.80px;color:#222222;font-weight:normal;">Rate</div>
<div class="t" style="left:768.43px;top:547.00px;font-size:11.80px;color:#222222;font-weight:normal;">Qty</div>
<div class="t" style="left:843.16px;top:547.00px;font-size:11.80px;color:#222222;font-weight:normal;">Balance Before</div>
<div class="t" style="left:939.06px;top:547.00px;font-size:11.80px;color:#222222;font-weight:normal;">Balance After</div>
<div class="t" style="left:1034.46px;top:547.00px;font-size:11.80px;color:#222222;font-weight:normal;">Location</div>
<div class="t" style="left:1131.36px;top:547.00px;font-size:11.80px;color:#222222;font-weight:normal;">Type</div>
<div class="t" style="left:1321.41px;top:547.00px;font-size:11.80px;color:#222222;font-weight:normal;">Store</div>
<div class="t" style="left:413.67px;top:577.00px;font-size:11.80px;color:#222222;font-weight:normal;">11/12/2020</div>
<div class="t" style="left:493.24px;top:577.00px;font-size:11.80px;color:#0b5c99;font-weight:normal;">IC-0000165</div>
<div class="t" style="left:768.63px;top:577.00px;font-size:11.80px;color:#222222;font-weight:normal;">-30</div>
<div class="t" style="left:843.73px;top:577.00px;font-size:11.80px;color:#222222;font-weight:normal;">90</div>
<div class="t" style="left:939.61px;top:577.00px;font-size:11.80px;color:#222222;font-weight:normal;">60</div>
<div class="t" style="left:1034.93px;top:577.00px;font-size:11.80px;color:#222222;font-weight:normal;">O-2</div>
<div style="position:absolute;left:1193px;top:571px;width:60.5px;height:21px;background:#f44336;border-radius:3px"></div>
<div class="t" style="left:1212.97px;top:576.00px;font-size:12.00px;color:#fff;font-weight:normal;">Out</div>
<div class="t" style="left:1321.56px;top:577.00px;font-size:11.03px;color:#222222;font-weight:normal;">Odessa</div>
<div class="t" style="left:413.67px;top:605.00px;font-size:11.80px;color:#222222;font-weight:normal;">11/12/2020</div>
<div class="t" style="left:493.24px;top:605.00px;font-size:11.80px;color:#0b5c99;font-weight:normal;">IC-0000165</div>
<div class="t" style="left:768.63px;top:605.00px;font-size:11.80px;color:#222222;font-weight:normal;">30</div>
<svg style="position:absolute;left:815.5px;top:601.5px" width="15" height="15" viewBox="0 0 15 15"><circle cx="7.5" cy="7.5" r="6.3" fill="none" stroke="#cf2a2a" stroke-width="1.6"/><path d="M7.5 3.6V8.6" stroke="#cf2a2a" stroke-width="2"/><rect x="6.5" y="9.9" width="2" height="1.8" fill="#cf2a2a"/></svg>
<div class="t" style="left:843.61px;top:605.00px;font-size:11.80px;color:#222222;font-weight:normal;">60</div>
<div class="t" style="left:939.73px;top:605.00px;font-size:11.80px;color:#222222;font-weight:normal;">90</div>
<div class="t" style="left:1034.93px;top:605.00px;font-size:11.80px;color:#222222;font-weight:normal;">O-2</div>
<div style="position:absolute;left:1193px;top:599px;width:60.5px;height:21px;background:#4caf50;border-radius:3px"></div>
<div class="t" style="left:1217.62px;top:604.00px;font-size:12.00px;color:#fff;font-weight:normal;">In</div>
<div class="t" style="left:1321.56px;top:605.00px;font-size:11.03px;color:#222222;font-weight:normal;">Odessa</div>
<div class="t" style="left:413.67px;top:633.00px;font-size:11.80px;color:#222222;font-weight:normal;">11/12/2020</div>
<div class="t" style="left:493.64px;top:633.00px;font-size:11.00px;color:#0b5c99;font-weight:bold;">Inventory adjus...</div>
<div class="t" style="left:768.27px;top:633.00px;font-size:11.80px;color:#222222;font-weight:normal;">10</div>
<div class="t" style="left:843.73px;top:633.00px;font-size:11.80px;color:#222222;font-weight:normal;">50</div>
<div class="t" style="left:939.61px;top:633.00px;font-size:11.80px;color:#222222;font-weight:normal;">60</div>
<div class="t" style="left:1034.93px;top:633.00px;font-size:11.80px;color:#222222;font-weight:normal;">O-2</div>
<div style="position:absolute;left:1193px;top:627px;width:60.5px;height:21px;background:#4caf50;border-radius:3px"></div>
<div class="t" style="left:1217.62px;top:632.00px;font-size:12.00px;color:#fff;font-weight:normal;">In</div>
<div class="t" style="left:1321.56px;top:633.00px;font-size:11.03px;color:#222222;font-weight:normal;">Odessa</div>
<div class="t" style="left:413.67px;top:661.00px;font-size:11.80px;color:#222222;font-weight:normal;">11/12/2020</div>
<div class="t" style="left:493.24px;top:661.00px;font-size:11.80px;color:#0b5c99;font-weight:normal;">IC-0000164</div>
<div class="t" style="left:768.63px;top:661.00px;font-size:11.80px;color:#222222;font-weight:normal;">-50</div>
<svg style="position:absolute;left:815.5px;top:657.5px" width="15" height="15" viewBox="0 0 15 15"><circle cx="7.5" cy="7.5" r="6.3" fill="none" stroke="#cf2a2a" stroke-width="1.6"/><path d="M7.5 3.6V8.6" stroke="#cf2a2a" stroke-width="2"/><rect x="6.5" y="9.9" width="2" height="1.8" fill="#cf2a2a"/></svg>
<div class="t" style="left:843.37px;top:661.00px;font-size:11.80px;color:#222222;font-weight:normal;">100</div>
<div class="t" style="left:939.73px;top:661.00px;font-size:11.80px;color:#222222;font-weight:normal;">50</div>
<div class="t" style="left:1034.93px;top:661.00px;font-size:11.80px;color:#222222;font-weight:normal;">O-2</div>
<div style="position:absolute;left:1193px;top:655px;width:60.5px;height:21px;background:#f44336;border-radius:3px"></div>
<div class="t" style="left:1212.97px;top:660.00px;font-size:12.00px;color:#fff;font-weight:normal;">Out</div>
<div class="t" style="left:1321.56px;top:661.00px;font-size:11.03px;color:#222222;font-weight:normal;">Odessa</div>
<div class="t" style="left:413.67px;top:689.00px;font-size:11.80px;color:#222222;font-weight:normal;">11/12/2020</div>
<div class="t" style="left:493.24px;top:689.00px;font-size:11.80px;color:#0b5c99;font-weight:normal;">IC-0000164</div>
<div class="t" style="left:768.51px;top:689.00px;font-size:11.80px;color:#222222;font-weight:normal;">20</div>
<div class="t" style="left:843.73px;top:689.00px;font-size:11.80px;color:#222222;font-weight:normal;">80</div>
<div class="t" style="left:939.37px;top:689.00px;font-size:11.80px;color:#222222;font-weight:normal;">100</div>
<div class="t" style="left:1034.93px;top:689.00px;font-size:11.80px;color:#222222;font-weight:normal;">O-2</div>
<div style="position:absolute;left:1193px;top:683px;width:60.5px;height:21px;background:#4caf50;border-radius:3px"></div>
<div class="t" style="left:1217.62px;top:688.00px;font-size:12.00px;color:#fff;font-weight:normal;">In</div>
<div class="t" style="left:1321.56px;top:689.00px;font-size:11.03px;color:#222222;font-weight:normal;">Odessa</div>
<div class="t" style="left:413.67px;top:717.00px;font-size:11.80px;color:#222222;font-weight:normal;">11/12/2020</div>
<div class="t" style="left:493.24px;top:717.00px;font-size:11.80px;color:#0b5c99;font-weight:normal;">IC-0000164</div>
<div class="t" style="left:768.27px;top:717.00px;font-size:11.80px;color:#222222;font-weight:normal;">10</div>
<div class="t" style="left:843.61px;top:717.00px;font-size:11.80px;color:#222222;font-weight:normal;">70</div>
<div class="t" style="left:939.73px;top:717.00px;font-size:11.80px;color:#222222;font-weight:normal;">80</div>
<div class="t" style="left:1034.93px;top:717.00px;font-size:11.80px;color:#222222;font-weight:normal;">O-2</div>
<div style="position:absolute;left:1193px;top:711px;width:60.5px;height:21px;background:#4caf50;border-radius:3px"></div>
<div class="t" style="left:1217.62px;top:716.00px;font-size:12.00px;color:#fff;font-weight:normal;">In</div>
<div class="t" style="left:1321.56px;top:717.00px;font-size:11.03px;color:#222222;font-weight:normal;">Odessa</div>
<div class="t" style="left:413.67px;top:745.00px;font-size:11.80px;color:#222222;font-weight:normal;">11/12/2020</div>
<div class="t" style="left:493.24px;top:745.00px;font-size:11.80px;color:#0b5c99;font-weight:normal;">IC-0000164</div>
<div class="t" style="left:768.51px;top:745.00px;font-size:11.80px;color:#222222;font-weight:normal;">20</div>
<svg style="position:absolute;left:815.5px;top:741.5px" width="15" height="15" viewBox="0 0 15 15"><circle cx="7.5" cy="7.5" r="6.3" fill="none" stroke="#cf2a2a" stroke-width="1.6"/><path d="M7.5 3.6V8.6" stroke="#cf2a2a" stroke-width="2"/><rect x="6.5" y="9.9" width="2" height="1.8" fill="#cf2a2a"/></svg>
<div class="t" style="left:843.73px;top:745.00px;font-size:11.80px;color:#222222;font-weight:normal;">50</div>
<div class="t" style="left:939.61px;top:745.00px;font-size:11.80px;color:#222222;font-weight:normal;">70</div>
<div class="t" style="left:1034.93px;top:745.00px;font-size:11.80px;color:#222222;font-weight:normal;">O-2</div>
<div style="position:absolute;left:1193px;top:739px;width:60.5px;height:21px;background:#4caf50;border-radius:3px"></div>
<div class="t" style="left:1217.62px;top:744.00px;font-size:12.00px;color:#fff;font-weight:normal;">In</div>
<div class="t" style="left:1321.56px;top:745.00px;font-size:11.03px;color:#222222;font-weight:normal;">Odessa</div>
<div class="t" style="left:413.67px;top:773.00px;font-size:11.80px;color:#222222;font-weight:normal;">11/11/2020</div>
<div class="t" style="left:493.24px;top:773.00px;font-size:11.80px;color:#0b5c99;font-weight:normal;">IC-0000162</div>
<div class="t" style="left:768.27px;top:773.00px;font-size:11.80px;color:#222222;font-weight:normal;">10</div>
<div class="t" style="left:843.96px;top:773.00px;font-size:11.80px;color:#222222;font-weight:normal;">40</div>
<div class="t" style="left:939.73px;top:773.00px;font-size:11.80px;color:#222222;font-weight:normal;">50</div>
<div class="t" style="left:1034.93px;top:773.00px;font-size:11.80px;color:#222222;font-weight:normal;">O-2</div>
<div style="position:absolute;left:1193px;top:767px;width:60.5px;height:21px;background:#4caf50;border-radius:3px"></div>
<div class="t" style="left:1217.62px;top:772.00px;font-size:12.00px;color:#fff;font-weight:normal;">In</div>
<div class="t" style="left:1321.56px;top:773.00px;font-size:11.03px;color:#222222;font-weight:normal;">Odessa</div>
<div class="t" style="left:413.67px;top:801.00px;font-size:11.80px;color:#222222;font-weight:normal;">11/11/2020</div>
<div class="t" style="left:493.24px;top:801.00px;font-size:11.80px;color:#0b5c99;font-weight:normal;">IC-0000162</div>
<div class="t" style="left:768.63px;top:801.00px;font-size:11.80px;color:#222222;font-weight:normal;">-10</div>
<svg style="position:absolute;left:815.5px;top:797.5px" width="15" height="15" viewBox="0 0 15 15"><circle cx="7.5" cy="7.5" r="6.3" fill="none" stroke="#cf2a2a" stroke-width="1.6"/><path d="M7.5 3.6V8.6" stroke="#cf2a2a" stroke-width="2"/><rect x="6.5" y="9.9" width="2" height="1.8" fill="#cf2a2a"/></svg>
<div class="t" style="left:843.73px;top:801.00px;font-size:11.80px;color:#222222;font-weight:normal;">50</div>
<div class="t" style="left:939.96px;top:801.00px;font-size:11.80px;color:#222222;font-weight:normal;">40</div>
<div class="t" style="left:1034.93px;top:801.00px;font-size:11.80px;color:#222222;font-weight:normal;">O-2</div>
<div style="position:absolute;left:1193px;top:795px;width:60.5px;height:21px;background:#f44336;border-radius:3px"></div>
<div class="t" style="left:1212.97px;top:800.00px;font-size:12.00px;color:#fff;font-weight:normal;">Out</div>
<div class="t" style="left:1321.56px;top:801.00px;font-size:11.03px;color:#222222;font-weight:normal;">Odessa</div>
<div class="t" style="left:413.67px;top:829.00px;font-size:11.80px;color:#222222;font-weight:normal;">11/11/2020</div>
<div class="t" style="left:493.24px;top:829.00px;font-size:11.80px;color:#0b5c99;font-weight:normal;">IRC-0012543</div>
<div class="t" style="left:768.51px;top:829.00px;font-size:11.80px;color:#222222;font-weight:normal;">20</div>
<svg style="position:absolute;left:815.5px;top:825.5px" width="15" height="15" viewBox="0 0 15 15"><circle cx="7.5" cy="7.5" r="6.3" fill="none" stroke="#cf2a2a" stroke-width="1.6"/><path d="M7.5 3.6V8.6" stroke="#cf2a2a" stroke-width="2"/><rect x="6.5" y="9.9" width="2" height="1.8" fill="#cf2a2a"/></svg>
<div class="t" style="left:843.73px;top:829.00px;font-size:11.80px;color:#222222;font-weight:normal;">30</div>
<div class="t" style="left:939.73px;top:829.00px;font-size:11.80px;color:#222222;font-weight:normal;">50</div>
<div class="t" style="left:1034.93px;top:829.00px;font-size:11.80px;color:#222222;font-weight:normal;">O-2</div>
<div style="position:absolute;left:1193px;top:823px;width:60.5px;height:21px;background:#4caf50;border-radius:3px"></div>
<div class="t" style="left:1217.62px;top:828.00px;font-size:12.00px;color:#fff;font-weight:normal;">In</div>
<div class="t" style="left:1321.56px;top:829.00px;font-size:11.03px;color:#222222;font-weight:normal;">Odessa</div>
<div class="t" style="left:413.67px;top:857.00px;font-size:11.80px;color:#222222;font-weight:normal;">11/11/2020</div>
<div class="t" style="left:493.24px;top:857.00px;font-size:11.80px;color:#0b5c99;font-weight:normal;">IRC-0012543</div>
<div class="t" style="left:768.63px;top:857.00px;font-size:11.80px;color:#222222;font-weight:normal;">30</div>
<div class="t" style="left:939.73px;top:857.00px;font-size:11.80px;color:#222222;font-weight:normal;">30</div>
<div class="t" style="left:1034.93px;top:857.00px;font-size:11.80px;color:#222222;font-weight:normal;">O-2</div>
<div style="position:absolute;left:1193px;top:851px;width:60.5px;height:21px;background:#4caf50;border-radius:3px"></div>
<div class="t" style="left:1217.62px;top:856.00px;font-size:12.00px;color:#fff;font-weight:normal;">In</div>
<div class="t" style="left:1321.56px;top:857.00px;font-size:11.03px;color:#222222;font-weight:normal;">Odessa</div>
<div style="position:absolute;left:399px;top:907px;width:1099px;height:1px;background:#e6e6e6"></div>
<div style="position:absolute;left:1416px;top:924px;width:75px;height:25px;background:#ebebeb"></div>
<div class="t" style="left:1431.25px;top:931.00px;font-size:12.90px;color:#0b5c99;font-weight:normal;transform:scaleX(0.8571);transform-origin:0 0;">CANCEL</div>
<div style="position:absolute;left:823px;top:851px;width:91px;height:25px;background:#f7f7f7;border:1px solid #767676;box-sizing:border-box"></div>
<div class="t" style="left:829.45px;top:859.00px;font-size:11.90px;color:#222222;font-weight:normal;">Damaged - 20</div>
<svg style="position:absolute;left:0;top:0" width="1655" height="952"><path d="M968.7 358L843.5 812" stroke="#ff0000" stroke-width="3.2" stroke-linecap="round"/><path d="M838.3 826L837.9 811.2L847 813.6Z" fill="#ff0000"/></svg>
</body></html>
